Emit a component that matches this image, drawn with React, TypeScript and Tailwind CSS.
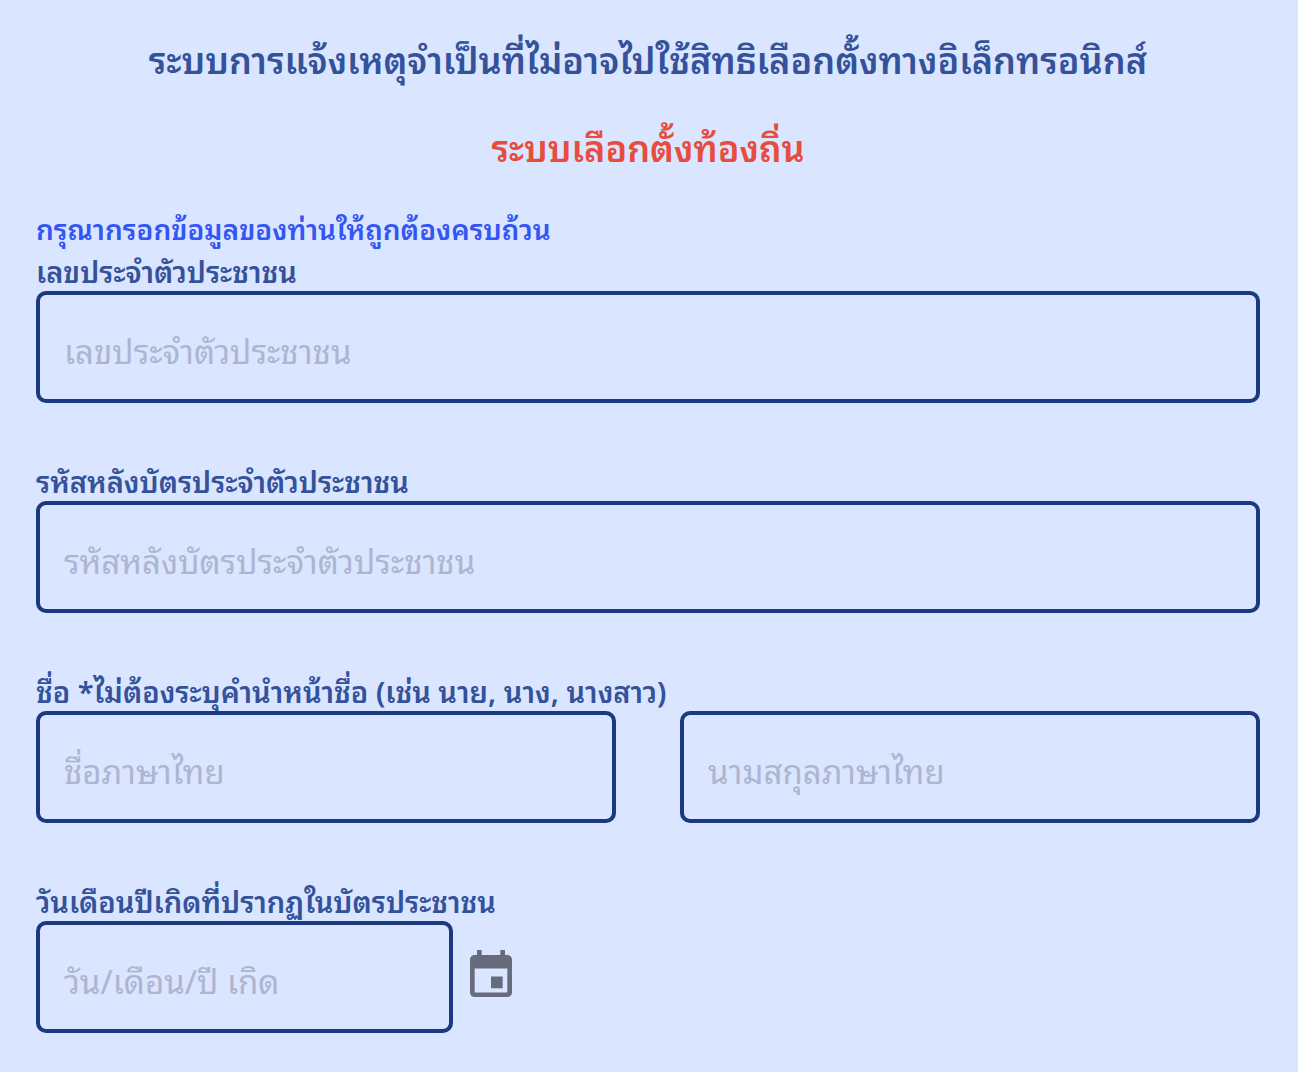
import React from "react";

interface FieldProps {
  id: string,
  placeholder: string,
  label?: string,
}

const Field: React.FC<FieldProps> = ({ id, placeholder, label }) => {
  return (
    <input
      id={id}
      type="text"
      aria-label={label}
      placeholder={placeholder}
      className="block w-full min-w-0 h-28 rounded-[10px] border-4 border-[#1c3880] bg-transparent px-6 pt-1 text-[33px] text-[#34529a] placeholder:text-[#adb5cf] outline-none"
    />
  );
};

const labelClass = "block h-10 text-[29px] leading-[38px] font-semibold whitespace-nowrap text-[#34529a]";

const App: React.FC = () => {
  return (
    <main className="min-h-screen bg-[#dae5ff] pl-9 pr-[38px] pt-7 pb-9 font-['Noto_Sans_Thai_Looped','Noto_Sans_Thai','Noto_Sans',sans-serif]">
      <h1 className="text-center text-[36px] leading-[60px] font-semibold text-[#34529a]">
        ระบบการแจ้งเหตุจำเป็นที่ไม่อาจไปใช้สิทธิเลือกตั้งทางอิเล็กทรอนิกส์
      </h1>
      <h2 className="mt-7 text-center text-[36px] leading-[60px] font-semibold text-[#e74c3c]">
        ระบบเลือกตั้งท้องถิ่น
      </h2>

      <form className="mt-8">
        <p className="mb-[3px] text-[28px] leading-10 font-semibold text-[#3355f5]">กรุณากรอกข้อมูลของท่านให้ถูกต้องครบถ้วน</p>

        <div className="flex flex-col gap-[58px]">
          <div>
            <label htmlFor="citizenId" className={labelClass}>เลขประจำตัวประชาชน</label>
            <Field id="citizenId" placeholder="เลขประจำตัวประชาชน" />
          </div>

          <div>
            <label htmlFor="laserCode" className={labelClass}>รหัสหลังบัตรประจำตัวประชาชน</label>
            <Field id="laserCode" placeholder="รหัสหลังบัตรประจำตัวประชาชน" />
          </div>

          <div>
            <label htmlFor="firstName" className={labelClass}>
              ชื่อ *ไม่ต้องระบุคำนำหน้าชื่อ (เช่น นาย, นาง, นางสาว)
            </label>
            <div className="grid grid-cols-2 gap-16">
              <Field id="firstName" placeholder="ชื่อภาษาไทย" />
              <Field id="lastName" placeholder="นามสกุลภาษาไทย" label="นามสกุลภาษาไทย" />
            </div>
          </div>

          <div>
            <label htmlFor="birthDate" className={labelClass}>วันเดือนปีเกิดที่ปรากฏในบัตรประชาชน</label>
            <div className="flex items-center gap-[10px]">
              <div className="w-[417px]">
                <Field id="birthDate" placeholder="วัน/เดือน/ปี เกิด" />
              </div>
              <button type="button" aria-label="ปฏิทิน" className="text-[#666c7b]">
                <svg viewBox="0 0 24 24" className="size-14" fill="currentColor">
                  <path d="M19 2.6h-1V.4h-2v2.2H8V.4H6v2.2H5c-1.11 0-2 .9-2 2v14c0 1.1.89 2 2 2h14c1.1 0 2-.9 2-2v-14c0-1.1-.9-2-2-2zm0 16H5V8.4h14v10.2zM12 11.8h5v5h-5z" />
                </svg>
              </button>
            </div>
          </div>
        </div>
      </form>
    </main>
  );
};

export default App;
